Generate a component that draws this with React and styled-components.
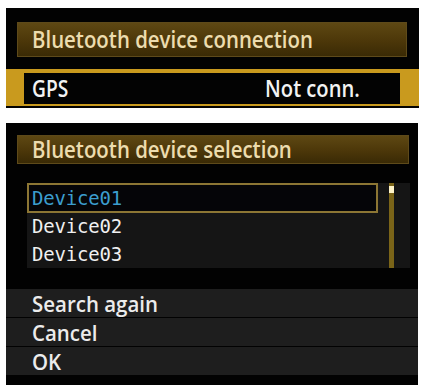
import React from "react";
import styled, { createGlobalStyle } from "styled-components";

const GlobalStyle = createGlobalStyle`
    html, body {
        margin: 0;
        padding: 0;
        background: #ffffff;
    }
`;

const Page = styled.div`
    width: 421px;
    height: 387px;
    box-sizing: border-box;
    padding: 8px 2px 2px 6px;
    display: flex;
    flex-direction: column;
    gap: 15px;
    font-family: "Open Sans", "Liberation Sans", sans-serif;
`;

const Panel = styled.div`
    background: #020202;
    display: flex;
    flex-direction: column;
    height: ${(p) => p.h}px;
    box-sizing: border-box;
    padding-top: ${(p) => p.top}px;
    margin-right: ${(p) => p.mr || 0}px;
`;

const Header = styled.div`
    height: ${(p) => p.h}px;
    margin: 0 ${(p) => p.mr}px 0 11px;
    box-sizing: border-box;
    border: 1px solid #5e4a1a;
    background: linear-gradient(180deg, #5e4813 0%, #4c3709 55%, #3a2a05 100%);
    color: #ecdcae;
    font-size: ${(p) => p.fs}px;
    font-weight: 600;
    line-height: 1.1;
    display: flex;
    align-items: center;
    padding-left: 14px;
`;

// narrow camera-menu lettering
const Label = styled.span`
    display: inline-block;
    white-space: nowrap;
    transform: scaleX(${(p) => p.sx || 0.83});
    transform-origin: ${(p) => (p.right ? "right" : "left")} center;
`;

const SelectedRow = styled.div`
    margin-top: 12px;
    background: #c99a1e;
    padding: 4px 19px 2px 18px;
`;

const RowInner = styled.div`
    background: #030303;
    height: 31px;
    display: flex;
    align-items: center;
    justify-content: space-between;
    padding: 0 40px 0 8px;
    color: #f2f2f2;
    font-size: 24px;
    font-weight: 600;
    line-height: 1.1;
`;

const ListArea = styled.div`
    margin: 19px 8px 0 21px;
    height: 85px;
    background: #151515;
    display: flex;
`;

const List = styled.div`
    flex: 1;
    display: flex;
    flex-direction: column;
`;

const Device = styled.div`
    height: ${(p) => (p.active ? 30 : 28)}px;
    box-sizing: border-box;
    border: 2px solid ${(p) => (p.active ? "#8c7634" : "transparent")};
    background: ${(p) => (p.active ? "#050508" : "transparent")};
    color: ${(p) => (p.active ? "#3c9ecf" : "#f0f0f0")};
    font-family: "DejaVu Sans Mono", "Liberation Mono", monospace;
    font-size: 19px;
    letter-spacing: -0.2px;
    display: flex;
    align-items: center;
    padding-left: 3px;
`;

const ScrollTrack = styled.div`
    width: 5px;
    margin: 0 16px 0 11px;
    background: #7a6418;
    position: relative;
`;

const ScrollThumb = styled.div`
    position: absolute;
    left: 0;
    top: 3px;
    width: 5px;
    height: 7px;
    background: #fff4c8;
`;

const Menu = styled.div`
    margin-top: 21px;
    display: flex;
    flex-direction: column;
    gap: 1px;
`;

const MenuItem = styled.div`
    height: 28px;
    background: #1e1e1e;
    color: #ececec;
    font-size: 22px;
    font-weight: 600;
    line-height: 1.1;
    display: flex;
    align-items: center;
    padding-left: 26px;
`;

export default function App() {
    return (
        <>
            <GlobalStyle />
            <Page>
                <Panel h={100} top={14}>
                    <Header h={35} mr={12} fs={24}>
                        <Label sx={0.85}>Bluetooth device connection</Label>
                    </Header>
                    <SelectedRow>
                        <RowInner>
                            <Label sx={0.8}>GPS</Label>
                            <Label sx={0.84} right>Not conn.</Label>
                        </RowInner>
                    </SelectedRow>
                </Panel>
                <Panel h={262} top={12} mr={1}>
                    <Header h={29} mr={9} fs={24}>
                        <Label sx={0.85}>Bluetooth device selection</Label>
                    </Header>
                    <ListArea>
                        <List>
                            <Device active>Device01</Device>
                            <Device>Device02</Device>
                            <Device>Device03</Device>
                        </List>
                        <ScrollTrack>
                            <ScrollThumb />
                        </ScrollTrack>
                    </ListArea>
                    <Menu>
                        <MenuItem><Label sx={0.93}>Search again</Label></MenuItem>
                        <MenuItem><Label sx={0.93}>Cancel</Label></MenuItem>
                        <MenuItem><Label sx={0.93}>OK</Label></MenuItem>
                    </Menu>
                </Panel>
            </Page>
        </>
    );
}
